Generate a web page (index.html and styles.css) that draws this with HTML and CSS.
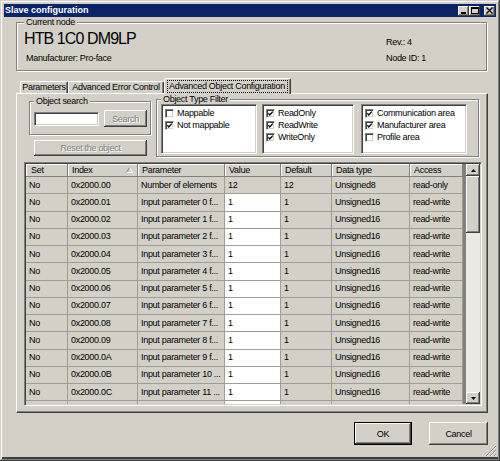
FILE: index.html
```html
<!DOCTYPE html>
<html lang="en">
<head>
    <meta charset="UTF-8">
    <title>Slave configuration</title>
    <link rel="stylesheet" href="styles.css">
</head>
<body>
<div class="window">
    <div class="titlebar">
        <span class="title">Slave configuration</span>
        <div class="caption-btns">
            <button class="cap-btn"><svg width="7" height="7" viewBox="0 0 7 7"><rect x="1" y="5" width="5" height="2"/></svg></button>
            <button class="cap-btn"><svg width="8" height="7" viewBox="0 0 8 7"><rect x="0.5" y="0.5" width="7" height="6" fill="none" stroke="#000"/><rect x="0" y="0" width="8" height="2"/></svg></button>
            <button class="cap-btn close"><svg width="7" height="7" viewBox="0 0 7 7"><path d="M0.5 0.5L6.5 6.5M6.5 0.5L0.5 6.5" stroke="#000" stroke-width="1.4"/></svg></button>
        </div>
    </div>

    <div class="client">
        <fieldset class="group node">
            <legend>Current node</legend>
            <div class="node-row">
                <div class="node-main">
                    <div class="node-name">HTB 1C0 DM9LP</div>
                    <div class="node-maker">Manufacturer: Pro-face</div>
                </div>
                <div class="node-side">
                    <div>Rev.: 4</div>
                    <div class="node-id">Node ID: 1</div>
                </div>
            </div>
        </fieldset>

        <div class="tabs">
            <div class="tab tab-params">Parameters</div>
            <div class="tab tab-error">Advanced Error Control</div>
            <div class="tab tab-active"><span class="focus">Advanced Object Configuration</span></div>
        </div>

        <div class="tab-panel">
            <div class="filters">
                <div class="search-col">
                    <fieldset class="group search">
                        <legend>Object search</legend>
                        <div class="search-row">
                            <input class="field" type="text">
                            <button class="btn btn-search" disabled>Search</button>
                        </div>
                    </fieldset>
                    <button class="btn btn-reset" disabled>Reset the object</button>
                </div>
                <fieldset class="group type-filter">
                    <legend>Object Type Filter</legend>
                    <div class="lists">
                        <div class="listbox lb-map">
                            <div class="item"><span class="chk"></span>Mappable</div>
                            <div class="item"><span class="chk on"><svg width="5" height="5" viewBox="0 0 5 5"><path d="M0.3 2.2L1.8 3.9L4.7 0.6" stroke="#000" stroke-width="1.3" fill="none"/></svg></span>Not mappable</div>
                        </div>
                        <div class="listbox lb-access">
                            <div class="item"><span class="chk on"><svg width="5" height="5" viewBox="0 0 5 5"><path d="M0.3 2.2L1.8 3.9L4.7 0.6" stroke="#000" stroke-width="1.3" fill="none"/></svg></span>ReadOnly</div>
                            <div class="item"><span class="chk on"><svg width="5" height="5" viewBox="0 0 5 5"><path d="M0.3 2.2L1.8 3.9L4.7 0.6" stroke="#000" stroke-width="1.3" fill="none"/></svg></span>ReadWrite</div>
                            <div class="item"><span class="chk on"><svg width="5" height="5" viewBox="0 0 5 5"><path d="M0.3 2.2L1.8 3.9L4.7 0.6" stroke="#000" stroke-width="1.3" fill="none"/></svg></span>WriteOnly</div>
                        </div>
                        <div class="listbox lb-area">
                            <div class="item"><span class="chk on"><svg width="5" height="5" viewBox="0 0 5 5"><path d="M0.3 2.2L1.8 3.9L4.7 0.6" stroke="#000" stroke-width="1.3" fill="none"/></svg></span>Communication area</div>
                            <div class="item"><span class="chk on"><svg width="5" height="5" viewBox="0 0 5 5"><path d="M0.3 2.2L1.8 3.9L4.7 0.6" stroke="#000" stroke-width="1.3" fill="none"/></svg></span>Manufacturer area</div>
                            <div class="item"><span class="chk"></span>Profile area</div>
                        </div>
                    </div>
                </fieldset>
            </div>

            <div class="grid">
                <div class="grid-body">
                    <table class="objects">
                        <thead>
                            <tr>
                                <th class="c-set">Set</th>
                                <th class="c-index">Index<span class="sort"><svg width="7" height="6" viewBox="0 0 7 6"><path d="M3.5 0.5L6.5 5.5H0.5" stroke="#fff" fill="none"/><path d="M0.5 5.5L3.5 0.5" stroke="#808080" fill="none"/></svg></span></th>
                                <th class="c-param">Parameter</th>
                                <th class="c-value">Value</th>
                                <th class="c-default">Default</th>
                                <th class="c-type">Data type</th>
                                <th class="c-access">Access</th>
                            </tr>
                        </thead>
                        <tbody>
                            <tr><td>No</td><td>0x2000.00</td><td>Number of elements</td><td>12</td><td>12</td><td>Unsigned8</td><td>read-only</td></tr>
                            <tr><td>No</td><td>0x2000.01</td><td>Input parameter 0 f...</td><td class="edit">1</td><td>1</td><td>Unsigned16</td><td>read-write</td></tr>
                            <tr><td>No</td><td>0x2000.02</td><td>Input parameter 1 f...</td><td class="edit">1</td><td>1</td><td>Unsigned16</td><td>read-write</td></tr>
                            <tr><td>No</td><td>0x2000.03</td><td>Input parameter 2 f...</td><td class="edit">1</td><td>1</td><td>Unsigned16</td><td>read-write</td></tr>
                            <tr><td>No</td><td>0x2000.04</td><td>Input parameter 3 f...</td><td class="edit">1</td><td>1</td><td>Unsigned16</td><td>read-write</td></tr>
                            <tr><td>No</td><td>0x2000.05</td><td>Input parameter 4 f...</td><td class="edit">1</td><td>1</td><td>Unsigned16</td><td>read-write</td></tr>
                            <tr><td>No</td><td>0x2000.06</td><td>Input parameter 5 f...</td><td class="edit">1</td><td>1</td><td>Unsigned16</td><td>read-write</td></tr>
                            <tr><td>No</td><td>0x2000.07</td><td>Input parameter 6 f...</td><td class="edit">1</td><td>1</td><td>Unsigned16</td><td>read-write</td></tr>
                            <tr><td>No</td><td>0x2000.08</td><td>Input parameter 7 f...</td><td class="edit">1</td><td>1</td><td>Unsigned16</td><td>read-write</td></tr>
                            <tr><td>No</td><td>0x2000.09</td><td>Input parameter 8 f...</td><td class="edit">1</td><td>1</td><td>Unsigned16</td><td>read-write</td></tr>
                            <tr><td>No</td><td>0x2000.0A</td><td>Input parameter 9 f...</td><td class="edit">1</td><td>1</td><td>Unsigned16</td><td>read-write</td></tr>
                            <tr><td>No</td><td>0x2000.0B</td><td>Input parameter 10 ...</td><td class="edit">1</td><td>1</td><td>Unsigned16</td><td>read-write</td></tr>
                            <tr><td>No</td><td>0x2000.0C</td><td>Input parameter 11 ...</td><td class="edit">1</td><td>1</td><td>Unsigned16</td><td>read-write</td></tr>
                            <tr class="partial"><td></td><td></td><td></td><td class="edit"></td><td></td><td></td><td></td></tr>
                        </tbody>
                    </table>
                </div>
                <div class="vscroll">
                    <div class="sb-btn"><svg width="5" height="3" viewBox="0 0 5 3"><path d="M2.5 0L5 3H0Z"/></svg></div>
                    <div class="sb-thumb"></div>
                    <div class="sb-track"></div>
                    <div class="sb-btn"><svg width="5" height="3" viewBox="0 0 5 3"><path d="M0 0H5L2.5 3Z"/></svg></div>
                </div>
            </div>
        </div>

        <div class="dialog-btns">
            <button class="btn btn-ok">OK</button>
            <button class="btn btn-cancel">Cancel</button>
        </div>
    </div>

    <svg class="grip" width="12" height="12" viewBox="0 0 12 12">
        <path d="M11 1L1 11M11 5L5 11M11 9L9 11" stroke="#808080" fill="none"/>
        <path d="M11 2L2 11M11 6L6 11M11 10L10 11" stroke="#fff" fill="none"/>
    </svg>
</div>
</body>
</html>
```

FILE: styles.css
```css
*{
    margin:0;
    padding:0;
    box-sizing:border-box;
}
body{
    background:#fff;
    font-family:"Liberation Sans", Arial, sans-serif;
    font-size:9px;
    letter-spacing:-0.3px;
    color:#000;
}
button, input{
    font:inherit;
    letter-spacing:inherit;
    color:inherit;
    border:none;
    outline:none;
}

/* window frame */
.window{
    position:relative;
    width:500px;
    height:461px;
    padding:4px 4px 4px 4px;
    background:#d4d0c8;
    display:flex;
    flex-direction:column;
    box-shadow:inset -1px -1px 0 #404040, inset 1px 1px 0 #d4d0c8, inset -2px -2px 0 #808080, inset 2px 2px 0 #fff, inset 0 -4px 0 #404040;
}
.titlebar{
    height:13px;
    background:#0a246a;
    color:#fff;
    display:flex;
    align-items:center;
    padding:0 1px;
}
.title{
    flex:1;
    font-weight:bold;
    letter-spacing:0;
    line-height:13px;
}
.caption-btns{
    display:flex;
}
.cap-btn{
    width:11px;
    height:10px;
    background:#d4d0c8;
    display:flex;
    align-items:center;
    justify-content:center;
    box-shadow:inset -1px -1px 0 #404040, inset 1px 1px 0 #fff, inset -2px -2px 0 #808080;
}
.cap-btn svg{
    display:block;
}
.cap-btn.close{
    margin-left:4px;
}

.client{
    flex:1;
    display:flex;
    flex-direction:column;
    padding:0 8px 0 12px;
}

/* group boxes */
.group{
    border:1px solid #808080;
    box-shadow:inset 1px 1px 0 #fff, 1px 1px 0 #fff;
}
.group legend{
    padding:0 2px;
    line-height:9px;
    background:#d4d0c8;
}
.node{
    margin:1px 1px 0 0;
    padding:3px 7px 6px 7px;
}
.node-row{
    display:flex;
}
.node-main{
    flex:1;
}
.node-name{
    font-size:16px;
    letter-spacing:-0.9px;
    line-height:18px;
}
.node-maker{
    margin:5px 0 0 2px;
    line-height:11px;
}
.node-side{
    width:93px;
    padding-top:7px;
    line-height:11px;
}
.node-id{
    margin-top:5px;
}

/* tabs */
.tabs{
    display:flex;
    align-items:flex-end;
    margin-top:7px;
    padding-left:4px;
    height:15px;
    position:relative;
    z-index:1;
}
.tab{
    height:12px;
    line-height:11px;
    text-align:center;
    background:#d4d0c8;
    border-top:1px solid #fff;
    border-left:1px solid #fff;
    border-right:1px solid #404040;
    box-shadow:inset -1px 0 0 #808080;
    border-radius:2px 2px 0 0;
}
.tab-params{
    width:48px;
}
.tab-error{
    width:96px;
}
.tab-active{
    width:127px;
    height:16px;
    margin-bottom:-1px;
    padding:1px 2px 0 2px;
    text-align:left;
}
.focus{
    display:block;
    border:1px dotted #000;
    padding:0 1px;
    line-height:11px;
}

.tab-panel{
    height:320px;
    border-top:1px solid #fff;
    border-left:1px solid #fff;
    border-right:1px solid #404040;
    border-bottom:1px solid #404040;
    box-shadow:inset -1px -1px 0 #808080;
    padding:1px 5px 0 7px;
}
.filters{
    display:flex;
    margin-left:5px;
    height:62px;
}
.search-col{
    width:122px;
    margin-top:2px;
}
.search{
    padding:4px 3px 7px 4px;
}
.search-row{
    display:flex;
    align-items:center;
    gap:5px;
}
.field{
    width:65px;
    height:14px;
    background:#fff;
    border-top:1px solid #808080;
    border-left:1px solid #808080;
    border-bottom:1px solid #fff;
    border-right:1px solid #fff;
    box-shadow:inset 1px 1px 0 #404040, inset -1px -1px 0 #d4d0c8;
}
.btn{
    background:#d4d0c8;
    box-shadow:inset -1px -1px 0 #404040, inset 1px 1px 0 #fff, inset -2px -2px 0 #808080;
    text-align:center;
}
.btn:disabled{
    color:#808080;
    text-shadow:1px 1px 0 #fff;
}
.btn-search{
    width:43px;
    height:17px;
}
.btn-reset{
    display:block;
    width:113px;
    height:16px;
    margin:5px 0 0 5px;
}
.type-filter{
    width:323px;
    margin-left:5px;
    padding:0 11px 2px 4px;
}
.lists{
    display:flex;
}
.listbox{
    height:50px;
    background:#fff;
    border-top:1px solid #808080;
    border-left:1px solid #808080;
    border-bottom:1px solid #fff;
    border-right:1px solid #fff;
    box-shadow:inset 1px 1px 0 #404040, inset -1px -1px 0 #d4d0c8;
    padding:2px 0 0 3px;
}
.lb-map{
    width:96px;
}
.lb-access{
    width:92px;
    margin-left:5px;
}
.lb-area{
    width:106px;
    margin-left:7px;
}
.item{
    height:12px;
    display:flex;
    align-items:center;
    gap:3px;
    white-space:nowrap;
}
.chk{
    width:9px;
    height:9px;
    flex:none;
    display:flex;
    align-items:center;
    justify-content:center;
    background:#fff;
    border-top:1px solid #808080;
    border-left:1px solid #808080;
    border-bottom:1px solid #fff;
    border-right:1px solid #fff;
    box-shadow:inset 1px 1px 0 #404040, inset -1px -1px 0 #d4d0c8;
}
.chk svg{
    display:block;
}

/* object grid */
.grid{
    margin-top:5px;
    width:458px;
    height:244px;
    display:flex;
    background:#808080;
    border-top:1px solid #808080;
    border-left:1px solid #808080;
    border-bottom:1px solid #fff;
    border-right:1px solid #fff;
    box-shadow:inset 1px 1px 0 #404040, inset -1px -1px 0 #d4d0c8;
    padding:1px;
}
.grid-body{
    flex:1;
    overflow:hidden;
}
.objects{
    width:437px;
    table-layout:fixed;
    border-collapse:separate;
    border-spacing:0;
}
.objects th{
    height:13px;
    padding:0 4px;
    text-align:left;
    font-weight:normal;
    line-height:11px;
    background:#d4d0c8;
    border-right:1px solid #808080;
    border-bottom:1px solid #808080;
    box-shadow:inset 1px 1px 0 #fff;
    white-space:nowrap;
}
.objects th.c-set{
    padding-left:5px;
}
.sort{
    float:right;
    margin-top:2px;
}
.sort svg{
    display:block;
}
.c-set{ width:42px; }
.c-index{ width:70px; }
.c-param{ width:87px; }
.c-value{ width:56px; }
.c-default{ width:51px; }
.c-type{ width:78px; }
.c-access{ width:53px; }
.objects td{
    height:17.25px;
    padding:0 3px;
    line-height:11px;
    background:#d4d0c8;
    border-right:1px solid #a09d96;
    border-bottom:1px solid #a09d96;
    white-space:nowrap;
    overflow:hidden;
}
.objects td.edit{
    background:#fff;
}
.vscroll{
    width:14px;
    margin-left:3px;
    display:flex;
    flex-direction:column;
}
.sb-btn{
    height:12px;
    background:#d4d0c8;
    display:flex;
    align-items:center;
    justify-content:center;
    box-shadow:inset -1px -1px 0 #404040, inset 1px 1px 0 #fff, inset -2px -2px 0 #808080;
}
.sb-btn svg{
    display:block;
}
.sb-thumb{
    height:57px;
    background:#d4d0c8;
    box-shadow:inset -1px -1px 0 #404040, inset 1px 1px 0 #fff, inset -2px -2px 0 #808080;
}
.sb-track{
    flex:1;
    background:#ebe9e4;
}

/* dialog buttons */
.dialog-btns{
    display:flex;
    justify-content:flex-end;
    gap:17px;
    margin-top:9px;
}
.btn-ok{
    width:58px;
    height:23px;
    border:1px solid #000;
}
.btn-cancel{
    width:59px;
    height:23px;
}
.grip{
    position:absolute;
    right:3px;
    bottom:4px;
}
```
